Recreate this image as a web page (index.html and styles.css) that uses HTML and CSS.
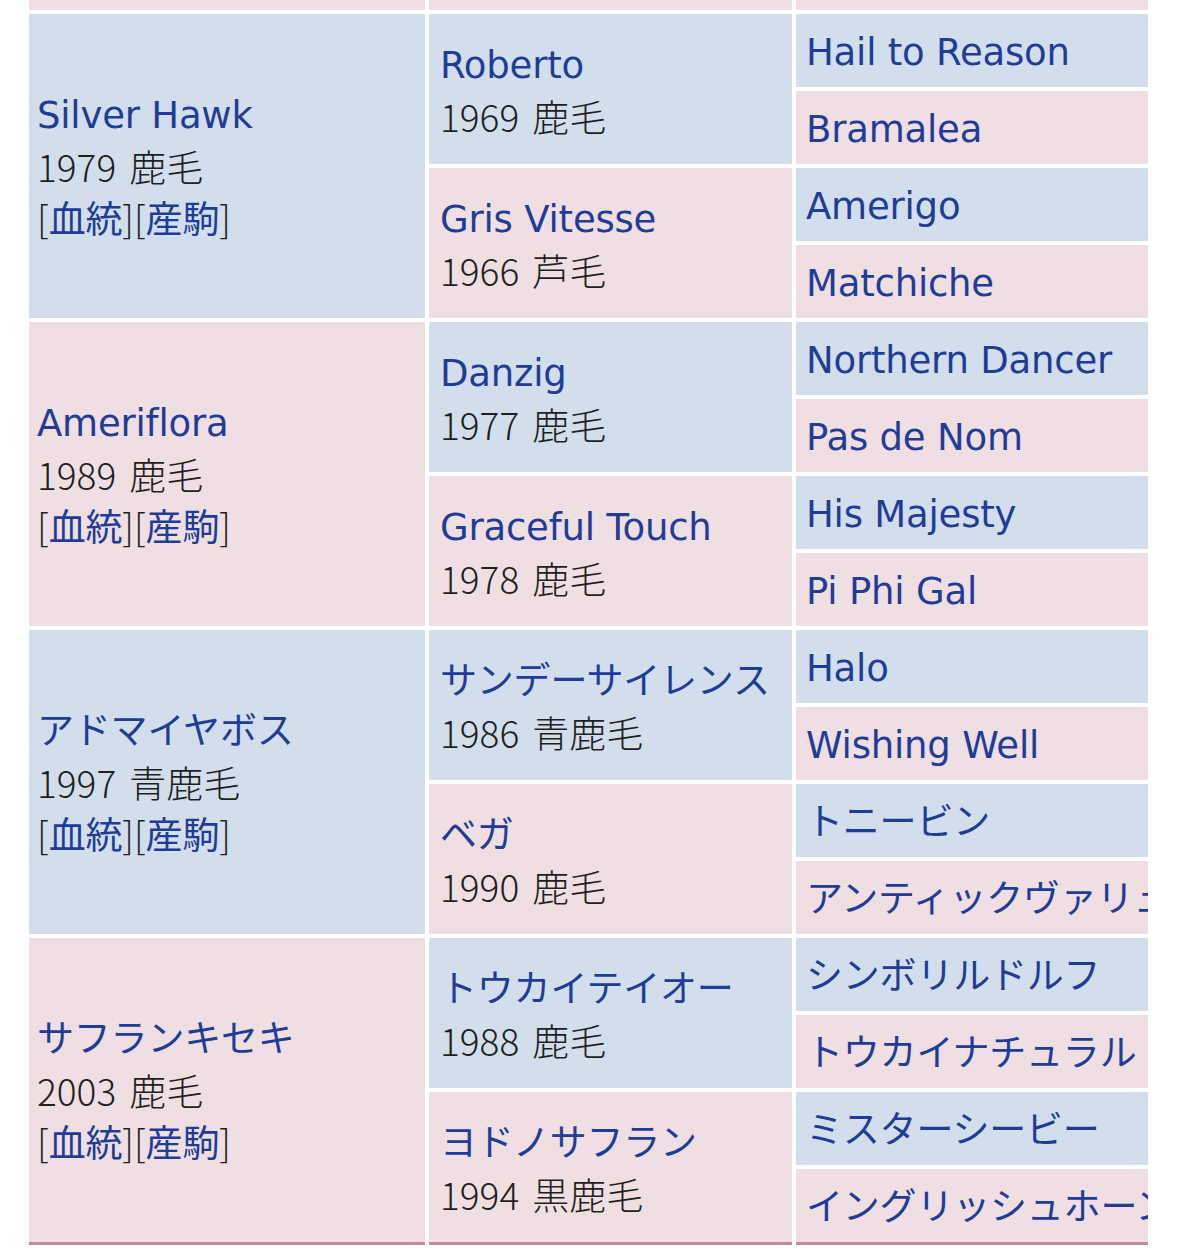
FILE: index.html
```html
<!DOCTYPE html>
<html lang="ja">
<head>
<meta charset="utf-8">
<title>血統表</title>
<link rel="stylesheet" href="styles.css">
</head>
<body>
<div class="scroller">
<table class="pedigree">
<colgroup><col class="c1"><col class="c2"><col class="c3"></colgroup>
<tr class="partial"><td class="f"></td><td class="f"></td><td class="f"></td></tr>

<tr>
<td class="m g1" rowspan="4"><a>Silver Hawk</a><br>1979 鹿毛<br>[<a>血統</a>][<a>産駒</a>]</td>
<td class="m g2" rowspan="2"><a>Roberto</a><br>1969 鹿毛</td>
<td class="m g3"><a>Hail to Reason</a></td>
</tr>
<tr><td class="f g3"><a>Bramalea</a></td></tr>
<tr>
<td class="f g2" rowspan="2"><a>Gris Vitesse</a><br>1966 芦毛</td>
<td class="m g3"><a>Amerigo</a></td>
</tr>
<tr><td class="f g3"><a>Matchiche</a></td></tr>

<tr>
<td class="f g1" rowspan="4"><a>Ameriflora</a><br>1989 鹿毛<br>[<a>血統</a>][<a>産駒</a>]</td>
<td class="m g2" rowspan="2"><a>Danzig</a><br>1977 鹿毛</td>
<td class="m g3"><a>Northern Dancer</a></td>
</tr>
<tr><td class="f g3"><a>Pas de Nom</a></td></tr>
<tr>
<td class="f g2" rowspan="2"><a>Graceful Touch</a><br>1978 鹿毛</td>
<td class="m g3"><a>His Majesty</a></td>
</tr>
<tr><td class="f g3"><a>Pi Phi Gal</a></td></tr>

<tr>
<td class="m g1" rowspan="4"><a>アドマイヤボス</a><br>1997 青鹿毛<br>[<a>血統</a>][<a>産駒</a>]</td>
<td class="m g2" rowspan="2"><a>サンデーサイレンス</a><br>1986 青鹿毛</td>
<td class="m g3"><a>Halo</a></td>
</tr>
<tr><td class="f g3"><a>Wishing Well</a></td></tr>
<tr>
<td class="f g2" rowspan="2"><a>ベガ</a><br>1990 鹿毛</td>
<td class="m g3"><a>トニービン</a></td>
</tr>
<tr><td class="f g3"><a>アンティックヴァリュー</a></td></tr>

<tr>
<td class="f g1 last" rowspan="4"><a>サフランキセキ</a><br>2003 鹿毛<br>[<a>血統</a>][<a>産駒</a>]</td>
<td class="m g2" rowspan="2"><a>トウカイテイオー</a><br>1988 鹿毛</td>
<td class="m g3"><a>シンボリルドルフ</a></td>
</tr>
<tr><td class="f g3"><a>トウカイナチュラル</a></td></tr>
<tr>
<td class="f g2 last" rowspan="2"><a>ヨドノサフラン</a><br>1994 黒鹿毛</td>
<td class="m g3"><a>ミスターシービー</a></td>
</tr>
<tr class="lastrow"><td class="f g3 last"><a>イングリッシュホーン</a></td></tr>
</table>
</div>
</body>
</html>
```
FILE: styles.css
```css
html, body {
  margin: 0;
  padding: 0;
  background: #ffffff;
}

body {
  font-family: "Noto Sans CJK JP", "Noto Sans", sans-serif;
  font-size: 37px;
  line-height: 51px;
  font-weight: 300;
  color: #1f1f1f;
}

.scroller {
  margin-left: 25px;
  width: 1123px;
  height: 1254px;
  overflow: hidden;
}

.pedigree {
  margin-top: -4px;
  border-collapse: separate;
  border-spacing: 4px;
  table-layout: fixed;
  width: 1200px;
}

.c1 { width: 396px; }
.c2 { width: 363px; }
.c3 { width: 429px; }

.pedigree tr { height: 73px; }
.pedigree tr.partial { height: 10px; }
.pedigree tr.lastrow { height: 76px; }

.pedigree td {
  padding: 0;
  vertical-align: middle;
  white-space: nowrap;
  overflow: hidden;
  word-spacing: 5px;
}

.pedigree .partial td { height: 10px; }

.m { background: #d2deeb; }
.f { background: #efdee2; }

.g1 { padding-left: 8px !important; }
.g2 { padding-left: 11px !important; }
.g3 { padding-left: 10px !important; }

.last { border-bottom: 3px solid #c28a9b; }

a {
  font-family: "DejaVu Sans", "Noto Sans CJK JP", sans-serif;
  font-weight: 400;
  word-spacing: normal;
  letter-spacing: -0.2px;
  color: #1f3c98;
  text-decoration: none;
}
```
